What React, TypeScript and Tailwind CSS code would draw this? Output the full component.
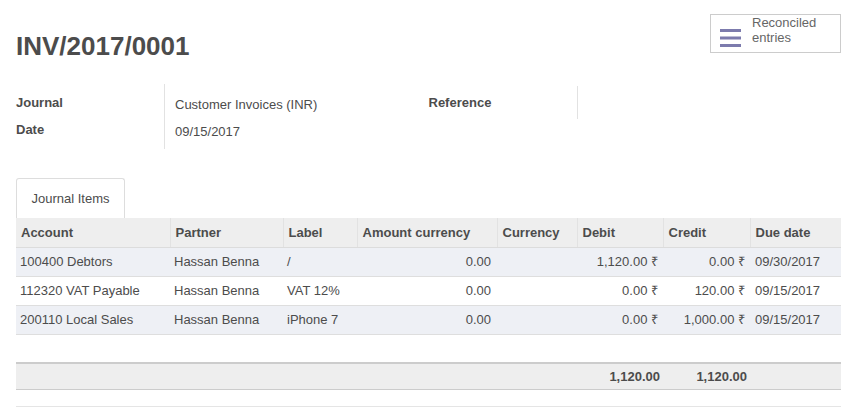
import React from 'react';

const font = { fontFamily: '"Liberation Sans", Arial, sans-serif' };

type Line = {
    account: string;
    partner: string;
    label: string;
    amount: string;
    debit: string;
    credit: string;
    due: string;
};

const lines: Line[] = [
    { account: '100400 Debtors', partner: 'Hassan Benna', label: '/', amount: '0.00', debit: '1,120.00 ₹', credit: '0.00 ₹', due: '09/30/2017' },
    { account: '112320 VAT Payable', partner: 'Hassan Benna', label: 'VAT 12%', amount: '0.00', debit: '0.00 ₹', credit: '120.00 ₹', due: '09/15/2017' },
    { account: '200110 Local Sales', partner: 'Hassan Benna', label: 'iPhone 7', amount: '0.00', debit: '0.00 ₹', credit: '1,000.00 ₹', due: '09/15/2017' },
];

const headers = [
    { name: 'Account', w: 'w-[154px]' },
    { name: 'Partner', w: 'w-[113px]' },
    { name: 'Label', w: 'w-[74px]' },
    { name: 'Amount currency', w: 'w-[140px]' },
    { name: 'Currency', w: 'w-[80px]' },
    { name: 'Debit', w: 'w-[86px]' },
    { name: 'Credit', w: 'w-[87px]' },
    { name: 'Due date', w: 'w-[91px]' },
];

// bars icon used by the stat button
const BarsIcon = () => (
    <svg width="21" height="18" viewBox="0 0 21 18" className="shrink-0">
        <rect x="0" y="0" width="21" height="3" fill="#7c7bad" />
        <rect x="0" y="7.5" width="21" height="3" fill="#7c7bad" />
        <rect x="0" y="15" width="21" height="3" fill="#7c7bad" />
    </svg>
);

const App: React.FC = () => {
    return (
        <div className="w-[856px] h-[419px] bg-white text-[13px] text-[#4c4c4c] overflow-hidden" style={font}>
            <div className="pl-4 pr-[15px] pt-[14px]">
                {/* Title + stat button */}
                <div className="flex justify-between items-start">
                    <h1 className="mt-[17px] text-[26px] leading-[30px] font-bold text-[#4c4c4c]">INV/2017/0001</h1>
                    <button className="flex items-start w-[131px] h-[39px] border border-[#cccccc] bg-white pl-[9px] text-left">
                        <div className="mt-[14px]">
                            <BarsIcon />
                        </div>
                        <div className="ml-[11px] leading-[15px] text-[#666666]">
                            Reconciled<br />entries
                        </div>
                    </button>
                </div>

                {/* Header fields */}
                <div className="grid grid-cols-2 mt-[23px]">
                    <div className="flex">
                        <div className="w-[149px] border-r border-[#e2e2e2] pt-[5px] pb-[6px] font-bold leading-[27px]">
                            <div>Journal</div>
                            <div>Date</div>
                        </div>
                        <div className="pl-[10px] pt-[7px] leading-[27px]">
                            <div>Customer Invoices (INR)</div>
                            <div>09/15/2017</div>
                        </div>
                    </div>
                    <div className="flex">
                        <div className="w-[149px] border-r border-[#e2e2e2] pt-[5px] pb-[4px] mt-[2px] font-bold leading-[27px] h-[33px]">
                            <div className="-mt-[2px]">Reference</div>
                        </div>
                    </div>
                </div>

                {/* Notebook */}
                <div className="mt-[29px]">
                    <div className="flex">
                        <div className="w-[109px] h-[40px] border border-b-0 border-[#dddddd] rounded-t-[3px] flex items-center justify-center">
                            Journal Items
                        </div>
                    </div>
                    <table className="w-full border-collapse">
                        <thead>
                            <tr className="bg-[#eeeeee] h-[29px]">
                                {headers.map((h, i) => (
                                    <th
                                        key={h.name}
                                        className={`${h.w} px-[5px] text-left font-bold border-b border-[#dcdcdc] ${i < headers.length - 1 ? 'border-r border-r-[#e2e2e2]' : ''}`}
                                    >
                                        {h.name}
                                    </th>
                                ))}
                            </tr>
                        </thead>
                        <tbody>
                            {lines.map((l, i) => (
                                <tr key={l.account} className={`h-[29px] border-b border-[#dedede] ${i % 2 === 0 ? 'bg-[#eef0f5]' : 'bg-white'}`}>
                                    <td className="px-[4px]">{l.account}</td>
                                    <td className="px-[4px]">{l.partner}</td>
                                    <td className="px-[4px]">{l.label}</td>
                                    <td className="px-[6px] text-right">{l.amount}</td>
                                    <td className="px-[6px]"></td>
                                    <td className="px-[5px] text-right">{l.debit}</td>
                                    <td className="px-[5px] text-right">{l.credit}</td>
                                    <td className="px-[5px]">{l.due}</td>
                                </tr>
                            ))}
                            <tr className="h-[29px]">
                                <td colSpan={8}></td>
                            </tr>
                        </tbody>
                        <tfoot>
                            <tr className="h-[26px] bg-[#eeeeee] border-t-2 border-b border-t-[#cccccc] border-b-[#cccccc] font-bold">
                                <td colSpan={5}></td>
                                <td className="px-[3px] text-right">1,120.00</td>
                                <td className="px-[3px] text-right">1,120.00</td>
                                <td></td>
                            </tr>
                        </tfoot>
                    </table>
                    <div className="mt-[16px] border-t border-[#e5e5e5]"></div>
                </div>
            </div>
        </div>
    );
};

export default App;
